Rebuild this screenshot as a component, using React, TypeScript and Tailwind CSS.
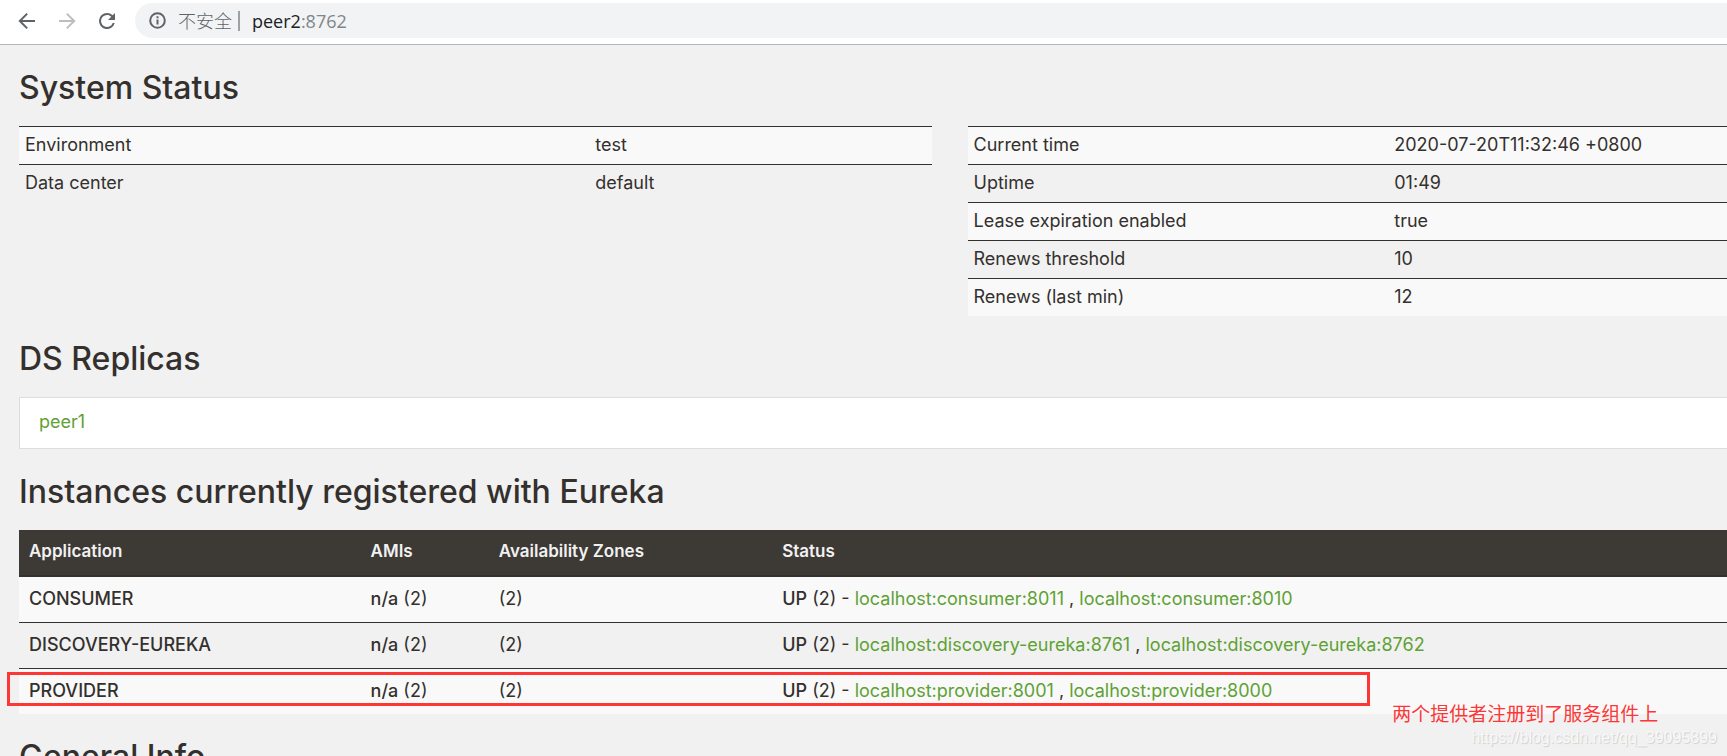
import React from "react";

const systemInfo = [
  { label: "Environment", value: "test" },
  { label: "Data center", value: "default" },
];

const runtimeInfo = [
  { label: "Current time", value: "2020-07-20T11:32:46 +0800" },
  { label: "Uptime", value: "01:49" },
  { label: "Lease expiration enabled", value: "true" },
  { label: "Renews threshold", value: "10" },
  { label: "Renews (last min)", value: "12" },
];

const apps = [
  { name: "CONSUMER", instances: ["localhost:consumer:8011", "localhost:consumer:8010"] },
  { name: "DISCOVERY-EUREKA", instances: ["localhost:discovery-eureka:8761", "localhost:discovery-eureka:8762"] },
  { name: "PROVIDER", instances: ["localhost:provider:8001", "localhost:provider:8000"] },
];

// Browser toolbar with the address bar
const Toolbar: React.FC = () => {
  return (
    <header className="flex h-[45px] items-start border-b border-[#b4b5b6] bg-white pl-[15px] pt-[3px]">
      <div className="flex h-[35px] shrink-0 items-center gap-4 text-[#5f6368]">
        <button aria-label="Back">
          <svg width="24" height="24" viewBox="0 0 24 24" fill="none" stroke="currentColor" strokeWidth="2">
            <path d="M20 12H5M12.2 4.6 4.8 12l7.4 7.4" />
          </svg>
        </button>
        <button aria-label="Forward" className="text-[#bbbdbf]">
          <svg width="24" height="24" viewBox="0 0 24 24" fill="none" stroke="currentColor" strokeWidth="2">
            <path d="M4 12h15M11.8 4.6l7.4 7.4-7.4 7.4" />
          </svg>
        </button>
        <button aria-label="Reload">
          <svg width="24" height="24" viewBox="0 0 24 24" fill="currentColor">
            <path d="M17.65 6.35A7.96 7.96 0 0 0 12 4a8 8 0 1 0 7.73 10h-2.08A6 6 0 1 1 12 6c1.66 0 3.14.69 4.22 1.78L13 11h7V4z" />
          </svg>
        </button>
      </div>
      <div className="ml-4 flex h-[35px] flex-1 items-center rounded-l-full bg-[#f1f3f4] pl-[14px] font-['Open_Sans','Noto_Sans_CJK_SC',sans-serif] text-lg">
        <svg width="17" height="17" viewBox="0 0 17 17" fill="none" stroke="#5f6368" strokeWidth="2" className="shrink-0">
          <circle cx="8.500" cy="8.500" r="7.300" />
          <path d="M8.500 7.500v5M8.500 4.200v2" />
        </svg>
        <span className="ml-3 font-light text-[#5f6368]">不安全</span>
        <span className="ml-[6px] h-5 w-0.5 bg-[#9fa2a5]" />
        <span className="ml-3 text-[#202124]">
          peer2<span className="text-[#80868b]">:8762</span>
        </span>
      </div>
    </header>
  );
};

const Heading: React.FC<{ children: React.ReactNode }> = ({ children }) => {
  return <h1 className="pt-[25px] pb-5 text-[32px] leading-9 font-medium text-[#34302d]">{children}</h1>;
};

const InfoTable: React.FC<{ rows: { label: string; value: string }[]; labelWidth: string }> = ({ rows, labelWidth }) => {
  return (
    <table className="w-full table-fixed self-start">
      <tbody>
        {rows.map((row) => (
          <tr key={row.label} className="border-t border-[#34302d] odd:bg-[#f9f9f9]">
            <td className={`px-[6px] pt-[6px] pb-[7px] ${labelWidth}`}>{row.label}</td>
            <td className="px-[6px] pt-[6px] pb-[7px]">{row.value}</td>
          </tr>
        ))}
      </tbody>
    </table>
  );
};

const App: React.FC = () => {
  return (
    <div className="h-screen overflow-hidden bg-[#f1f1f1] font-['Inter','Noto_Sans_CJK_SC',sans-serif] text-lg leading-6 text-[#34302d]">
      <Toolbar />
      <main className="pl-[19px]">
        <Heading>System Status</Heading>
        <div className="grid grid-cols-[912fr_759fr] gap-9">
          <InfoTable rows={systemInfo} labelWidth="w-[62.5%]" />
          <InfoTable rows={runtimeInfo} labelWidth="w-[55.4%]" />
        </div>

        <Heading>DS Replicas</Heading>
        <ul className="border border-r-0 border-[#dddddd] bg-white px-[19px] pt-3 pb-[14px]">
          <li>
            <a href="#peer1" className="text-[#5fa134]">peer1</a>
          </li>
        </ul>

        <Heading>Instances currently registered with Eureka</Heading>
        <div className="relative">
          <table className="w-full table-fixed text-left">
            <thead>
              <tr className="border-b-2 border-[#34302d] bg-[#3d3935] text-[17px] text-[#f1f1f1]">
                <th className="w-[20%] px-[10px] pt-[9px] pb-3 font-semibold">Application</th>
                <th className="w-[7.5%] px-[10px] pt-[9px] pb-3 font-semibold">AMIs</th>
                <th className="w-[16.6%] px-[10px] pt-[9px] pb-3 font-semibold">Availability Zones</th>
                <th className="px-[10px] pt-[9px] pb-3 font-semibold">Status</th>
              </tr>
            </thead>
            <tbody>
              {apps.map((app) => (
                <tr key={app.name} className="border-t border-[#34302d] odd:bg-[#f9f9f9]">
                  <td className="px-[10px] pt-[10px] pb-[11px] font-medium">{app.name}</td>
                  <td className="px-[10px] pt-[10px] pb-[11px]"><b className="font-medium">n/a</b> (2)</td>
                  <td className="px-[10px] pt-[10px] pb-[11px]">(2)</td>
                  <td className="px-[10px] pt-[10px] pb-[11px]">
                    <b className="font-medium">UP</b> (2) -{" "}
                    {app.instances.map((instance, index) => (
                      <React.Fragment key={instance}>
                        {index > 0 && " , "}
                        <a href={`#${instance}`} className="text-[#5fa134]">{instance}</a>
                      </React.Fragment>
                    ))}
                  </td>
                </tr>
              ))}
            </tbody>
          </table>

          {/* Marker around the provider row */}
          <div className="absolute -left-3 bottom-2 h-[34px] w-[79.8%] border-[3px] border-[#fd3636]" />
          <p className="absolute left-[80.4%] -bottom-[11px] whitespace-nowrap font-['Noto_Sans_CJK_SC',sans-serif] text-[19px] text-[#fd3636]">
            两个提供者注册到了服务组件上
          </p>
          <p className="absolute right-[10px] -bottom-9 font-['Liberation_Sans',sans-serif] text-base text-[#f8f8f8] [text-shadow:1px_1px_1px_#cfcfcf]">
            https://blog.csdn.net/qq_39095899
          </p>
        </div>

        <Heading>General Info</Heading>
      </main>
    </div>
  );
};

export default App;
